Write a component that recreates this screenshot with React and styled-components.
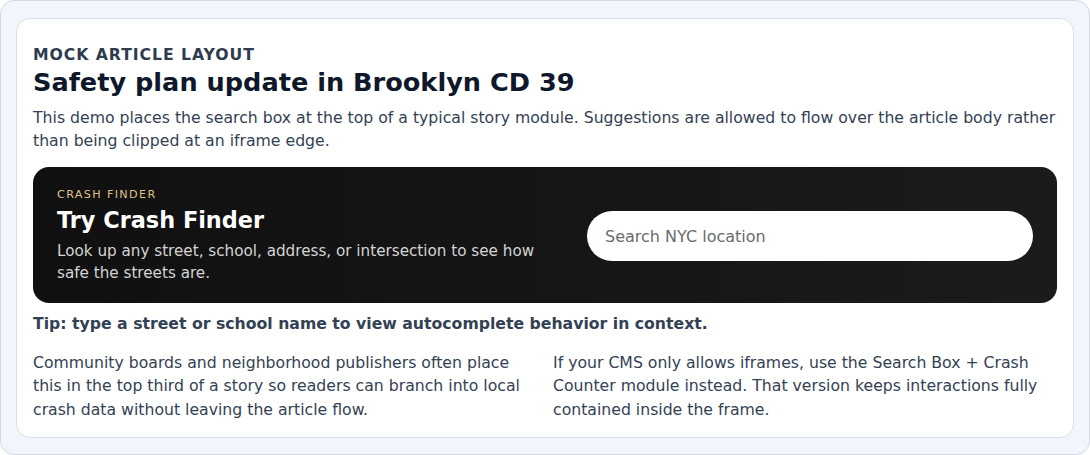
import React from "react";
import styled, { createGlobalStyle } from "styled-components";

const GlobalStyle = createGlobalStyle`
  html, body {
    margin: 0;
    padding: 0;
    background: #ffffff;
  }
  body {
    font-family: "DejaVu Sans", sans-serif;
  }
  * {
    box-sizing: border-box;
  }
`;

const Frame = styled.div`
  min-height: 100vh;
  background: #f2f5fb;
  border: 1px solid #d3d9e4;
  border-radius: 14px;
  padding: 17px 15px 15px;
`;

const Card = styled.article`
  background: #ffffff;
  border: 1px solid #d7deea;
  border-radius: 14px;
  padding: 27px 16px 16px;
`;

const Eyebrow = styled.div`
  font-size: 15.7px;
  font-weight: 700;
  letter-spacing: 0.06em;
  text-transform: uppercase;
  color: #2f3b4e;
  line-height: 1.2;
`;

const Title = styled.h1`
  margin: 1px 0 0;
  font-size: 25.6px;
  font-weight: 700;
  color: #0f172a;
  line-height: 1.3;
`;

const Lead = styled.p`
  margin: 7px 0 15px;
  font-size: 15.7px;
  line-height: 23px;
  color: #334155;
`;

const Finder = styled.section`
  display: grid;
  grid-template-columns: minmax(0, 1fr) 446px;
  gap: 32px;
  align-items: center;
  padding: 21px 24px 19px;
  border-radius: 16px;
  background: linear-gradient(90deg, #101010, #1b1b1b);
`;

const FinderLabel = styled.div`
  font-size: 11.2px;
  letter-spacing: 0.12em;
  color: #dcc088;
  line-height: 14px;
`;

const FinderTitle = styled.h2`
  margin: 5px 0 6px;
  font-size: 22.4px;
  font-weight: 700;
  color: #ffffff;
  line-height: 1.2;
`;

const FinderText = styled.p`
  margin: 0;
  font-size: 15.2px;
  line-height: 22px;
  color: #d4d4d4;
`;

const SearchInput = styled.input`
  width: 100%;
  height: 50px;
  border: none;
  border-radius: 25px;
  background: #ffffff;
  padding: 0 18px;
  font-family: "DejaVu Sans", sans-serif;
  font-size: 16px;
  color: #111827;
  outline: none;

  &::placeholder {
    color: #6b6b6b;
  }
`;

const Tip = styled.p`
  margin: 11px 0 0;
  font-size: 15.7px;
  font-weight: 700;
  color: #334155;
  line-height: 20px;
`;

const Columns = styled.div`
  display: grid;
  grid-template-columns: 1fr 1fr;
  gap: 16px;
  margin-top: 17px;
`;

const Body = styled.p`
  margin: 0;
  font-size: 15.7px;
  line-height: 23.5px;
  color: #334155;
`;

export default function App() {
  return (
    <>
      <GlobalStyle />
      <Frame>
        <Card>
          <Eyebrow>Mock article layout</Eyebrow>
          <Title>Safety plan update in Brooklyn CD 39</Title>
          <Lead>
            This demo places the search box at the top of a typical story
            module. Suggestions are allowed to flow over the article body
            rather than being clipped at an iframe edge.
          </Lead>
          <Finder>
            <div>
              <FinderLabel>CRASH FINDER</FinderLabel>
              <FinderTitle>Try Crash Finder</FinderTitle>
              <FinderText>
                Look up any street, school, address, or intersection to see
                how safe the streets are.
              </FinderText>
            </div>
            <SearchInput type="text" placeholder="Search NYC location" />
          </Finder>
          <Tip>
            Tip: type a street or school name to view autocomplete behavior in
            context.
          </Tip>
          <Columns>
            <Body>
              Community boards and neighborhood publishers often place this in
              the top third of a story so readers can branch into local crash
              data without leaving the article flow.
            </Body>
            <Body>
              If your CMS only allows iframes, use the Search Box + Crash
              Counter module instead. That version keeps interactions fully
              contained inside the frame.
            </Body>
          </Columns>
        </Card>
      </Frame>
    </>
  );
}
